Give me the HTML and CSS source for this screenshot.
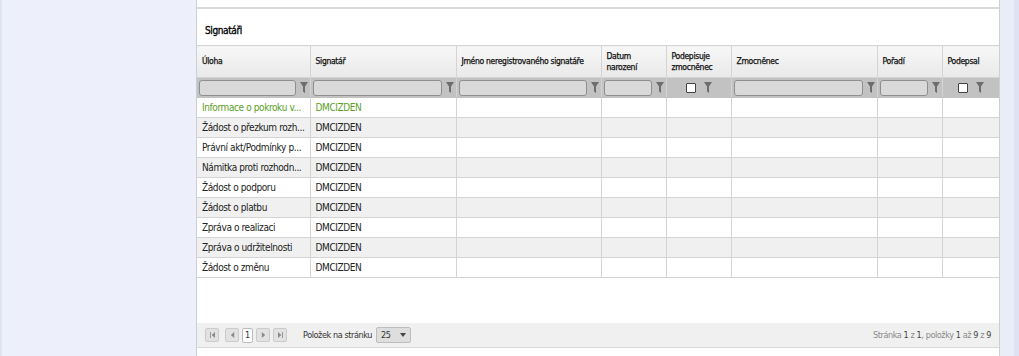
FILE: index.html
```html
<!DOCTYPE html>
<html lang="cs">
<head>
    <meta charset="UTF-8">
    <meta name="viewport" content="width=device-width, initial-scale=1.0">
    <title>Signatáři</title>
    <link rel="stylesheet" href="styles.css">
</head>
<body>
<div class="page">
    <div class="sidebar"></div>

    <div class="panel">
        <div class="panel-top"></div>
        <h2 class="section-title">Signatáři</h2>

        <div class="grid">
            <table class="grid-table">
                <colgroup>
                    <col style="width:113px">
                    <col style="width:146px">
                    <col style="width:145px">
                    <col style="width:65px">
                    <col style="width:65px">
                    <col style="width:146px">
                    <col style="width:65px">
                    <col>
                </colgroup>
                <thead>
                    <tr class="head-row">
                        <th>Úloha</th>
                        <th>Signatář</th>
                        <th>Jméno neregistrovaného signatáře</th>
                        <th>Datum<br>narození</th>
                        <th>Podepisuje<br>zmocněnec</th>
                        <th>Zmocněnec</th>
                        <th>Pořadí</th>
                        <th>Podepsal</th>
                    </tr>
                    <tr class="filter-row">
                        <td><div class="filter"><span class="filter-input"></span><svg class="funnel" viewBox="0 0 8 11"><path d="M0 0h8L5 4.5V11L3 9.5V4.5z"/></svg></div></td>
                        <td><div class="filter"><span class="filter-input"></span><svg class="funnel" viewBox="0 0 8 11"><path d="M0 0h8L5 4.5V11L3 9.5V4.5z"/></svg></div></td>
                        <td><div class="filter"><span class="filter-input"></span><svg class="funnel" viewBox="0 0 8 11"><path d="M0 0h8L5 4.5V11L3 9.5V4.5z"/></svg></div></td>
                        <td><div class="filter"><span class="filter-input"></span><svg class="funnel" viewBox="0 0 8 11"><path d="M0 0h8L5 4.5V11L3 9.5V4.5z"/></svg></div></td>
                        <td><div class="filter filter-check"><span class="check"></span><svg class="funnel" viewBox="0 0 8 11"><path d="M0 0h8L5 4.5V11L3 9.5V4.5z"/></svg></div></td>
                        <td><div class="filter"><span class="filter-input"></span><svg class="funnel" viewBox="0 0 8 11"><path d="M0 0h8L5 4.5V11L3 9.5V4.5z"/></svg></div></td>
                        <td><div class="filter"><span class="filter-input"></span><svg class="funnel" viewBox="0 0 8 11"><path d="M0 0h8L5 4.5V11L3 9.5V4.5z"/></svg></div></td>
                        <td><div class="filter filter-check"><span class="check"></span><svg class="funnel" viewBox="0 0 8 11"><path d="M0 0h8L5 4.5V11L3 9.5V4.5z"/></svg></div></td>
                    </tr>
                </thead>
                <tbody>
                    <tr class="selected"><td title="Informace o pokroku v realizaci">Informace o pokroku v...</td><td>DMCIZDEN</td><td></td><td></td><td></td><td></td><td></td><td></td></tr>
                    <tr><td title="Žádost o přezkum rozhodnutí">Žádost o přezkum rozh...</td><td>DMCIZDEN</td><td></td><td></td><td></td><td></td><td></td><td></td></tr>
                    <tr><td title="Právní akt/Podmínky poskytnutí">Právní akt/Podmínky p...</td><td>DMCIZDEN</td><td></td><td></td><td></td><td></td><td></td><td></td></tr>
                    <tr><td title="Námitka proti rozhodnutí">Námitka proti rozhodn...</td><td>DMCIZDEN</td><td></td><td></td><td></td><td></td><td></td><td></td></tr>
                    <tr><td>Žádost o podporu</td><td>DMCIZDEN</td><td></td><td></td><td></td><td></td><td></td><td></td></tr>
                    <tr><td>Žádost o platbu</td><td>DMCIZDEN</td><td></td><td></td><td></td><td></td><td></td><td></td></tr>
                    <tr><td>Zpráva o realizaci</td><td>DMCIZDEN</td><td></td><td></td><td></td><td></td><td></td><td></td></tr>
                    <tr><td>Zpráva o udržitelnosti</td><td>DMCIZDEN</td><td></td><td></td><td></td><td></td><td></td><td></td></tr>
                    <tr><td>Žádost o změnu</td><td>DMCIZDEN</td><td></td><td></td><td></td><td></td><td></td><td></td></tr>
                </tbody>
            </table>

            <div class="grid-empty"></div>

            <div class="pager">
                <div class="pager-nav">
                    <span class="pg-btn"><svg viewBox="0 0 6 7"><path d="M0 0h1v7H0zM6 0v7L2 3.5z"/></svg></span>
                    <span class="pg-btn"><svg viewBox="0 0 6 7"><path d="M5 0v7L1 3.5z"/></svg></span>
                    <span class="pg-current">1</span>
                    <span class="pg-btn"><svg viewBox="0 0 6 7"><path d="M1 0v7L5 3.5z"/></svg></span>
                    <span class="pg-btn"><svg viewBox="0 0 6 7"><path d="M0 0v7L4 3.5zM5 0h1v7H5z"/></svg></span>
                </div>
                <span class="pg-label">Položek na stránku</span>
                <span class="pg-size">25<svg viewBox="0 0 6 4"><path d="M0 0h6L3 4z"/></svg></span>
                <span class="pg-info">Stránka <b>1</b> z <b>1</b>, položky <b>1</b> až <b>9</b> z <b>9</b></span>
            </div>
        </div>
    </div>

    <div class="gutter"></div>
</div>
</body>
</html>
```

FILE: styles.css
```css
html, body {
    margin: 0;
    padding: 0;
}

body {
    background-color: #edf0fa;
    font-family: "DejaVu Sans Condensed", "Liberation Sans", sans-serif;
    font-size: 10px;
    color: #333;
}

.page {
    display: flex;
    height: 356px;
    overflow: hidden;
}

.sidebar {
    width: 194px;
    border-left: 2px solid #dfe4f3;
    background-color: #edf0fa;
}

.panel {
    width: 802px;
    background-color: #fff;
    border-left: 1px solid #cfcfcf;
    border-right: 1px solid #cfcfcf;
    display: flex;
    flex-direction: column;
}

.panel-top {
    height: 7px;
    border-bottom: 2px solid #d9d9d9;
}

.section-title {
    margin: 0;
    height: 36px;
    box-sizing: border-box;
    padding: 15px 8px 0;
    font-size: 10px;
    line-height: 14px;
    font-weight: normal;
    letter-spacing: -0.4px;
    -webkit-text-stroke: 0.3px #000;
    color: #000;
}

.grid-table {
    width: 802px;
    table-layout: fixed;
    border-collapse: collapse;
}

.grid-table th,
.grid-table td {
    border: 1px solid #d4d4d4;
    padding: 0 5px;
    text-align: left;
    white-space: nowrap;
    overflow: hidden;
    text-overflow: ellipsis;
}

.grid-table tr > :first-child {
    border-left: none;
}

.grid-table tr > :last-child {
    border-right: none;
}

.head-row th {
    height: 31px;
    background: linear-gradient(#f7f7f7, #e9e9e9);
    font-size: 8.5px;
    line-height: 11px;
    font-weight: normal;
    letter-spacing: -0.3px;
    -webkit-text-stroke: 0.25px #111;
    color: #111;
    white-space: normal;
}

.filter-row td {
    height: 19px;
    padding: 0 2px;
    background-color: #c2c2c2;
    border-color: #c2c2c2 #d4d4d4;
}

.filter {
    display: flex;
    align-items: center;
    gap: 4px;
}

.filter-input {
    flex: 1;
    height: 14px;
    border: 1px solid #8f8f8f;
    border-radius: 3px;
    background-color: #d9d9d9;
}

.filter-check {
    justify-content: center;
    gap: 8px;
}

.check {
    width: 8px;
    height: 8px;
    border: 1px solid #444;
    border-radius: 1px;
    background-color: #fff;
}

.funnel {
    width: 8px;
    height: 11px;
    fill: #6d6d6d;
    flex: none;
}

tbody td {
    height: 19px;
    padding-right: 0;
    font-size: 10px;
    letter-spacing: -0.4px;
    color: #222;
}

tbody tr:nth-child(even) td {
    background-color: #f0f0f0;
}

tbody tr.selected td {
    color: #5c9e1f;
}

.grid-empty {
    height: 45px;
}

.pager {
    display: flex;
    align-items: center;
    height: 24px;
    padding: 0 8px;
    background-color: #f0f0f0;
    border-bottom: 1px solid #d9d9d9;
    font-size: 9px;
    letter-spacing: -0.4px;
    color: #333;
}

.pager-nav {
    display: flex;
    align-items: center;
    gap: 3px;
}

.pg-btn {
    width: 14px;
    height: 14px;
    box-sizing: border-box;
    border: 1px solid #cbcbcb;
    border-radius: 2px;
    background-color: #e2e2e2;
    display: flex;
    align-items: center;
    justify-content: center;
}

.pg-btn svg {
    width: 5px;
    height: 6px;
    fill: #8a8a8a;
}

.pg-btn:nth-child(2) {
    margin-left: 3px;
}

.pg-current {
    width: 11px;
    height: 15px;
    box-sizing: border-box;
    border: 1px solid #bbb;
    border-radius: 2px;
    background-color: #fff;
    text-align: center;
    line-height: 13px;
}

.pg-label {
    margin-left: 16px;
}

.pg-size {
    margin-left: 4px;
    width: 35px;
    height: 16px;
    box-sizing: border-box;
    padding: 0 4px;
    border: 1px solid #bdbdbd;
    border-radius: 2px;
    background-color: #dedede;
    display: flex;
    align-items: center;
    justify-content: space-between;
}

.pg-size svg {
    width: 6px;
    height: 4px;
    fill: #444;
}

.pg-info {
    margin-left: auto;
    color: #8a8a8a;
}

.pg-info b {
    font-weight: normal;
    color: #444;
}

.gutter {
    flex: 1;
    background-color: #e9edf8;
    border-right: 5px solid #dde3f3;
}
```
